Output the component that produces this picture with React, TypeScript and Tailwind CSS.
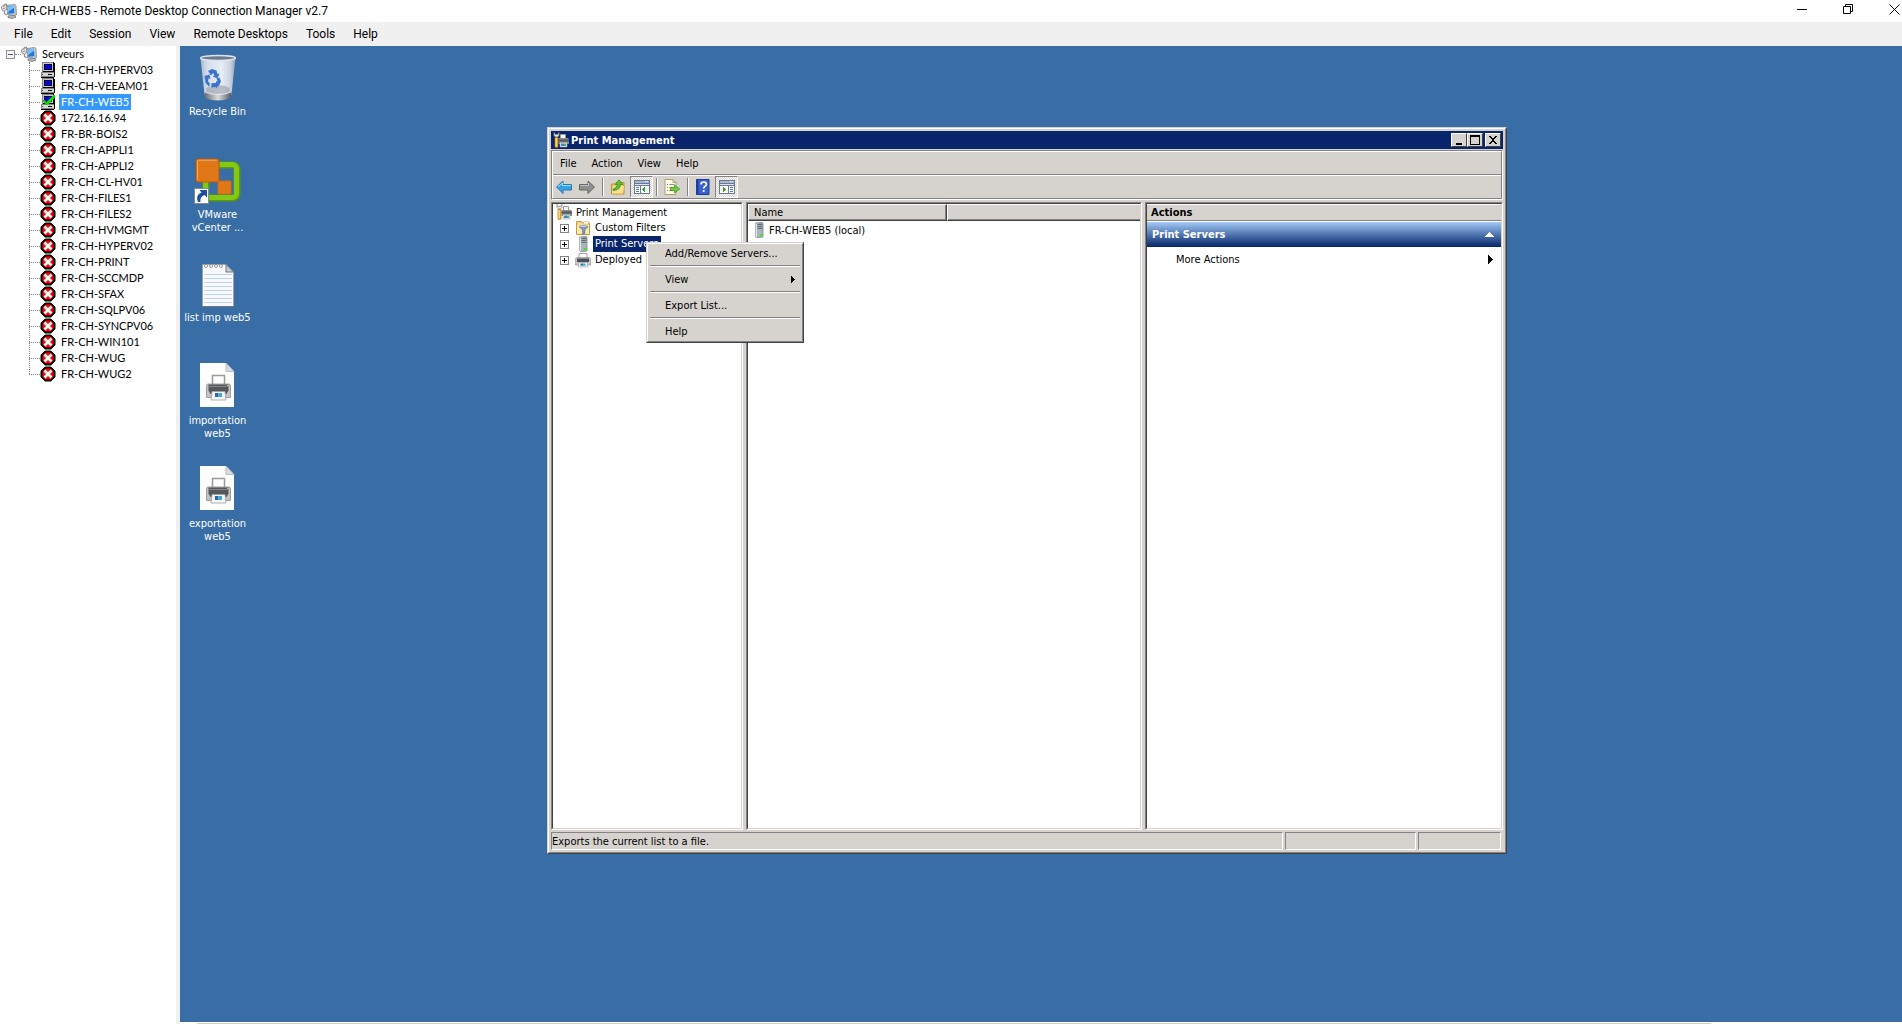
import React from 'react'

type IconProps = { className?: string }

const servers = [
    { name: 'FR-CH-HYPERV03', state: 'idle' },
    { name: 'FR-CH-VEEAM01', state: 'idle' },
    { name: 'FR-CH-WEB5', state: 'connected' },
    { name: '172.16.16.94', state: 'off' },
    { name: 'FR-BR-BOIS2', state: 'off' },
    { name: 'FR-CH-APPLI1', state: 'off' },
    { name: 'FR-CH-APPLI2', state: 'off' },
    { name: 'FR-CH-CL-HV01', state: 'off' },
    { name: 'FR-CH-FILES1', state: 'off' },
    { name: 'FR-CH-FILES2', state: 'off' },
    { name: 'FR-CH-HVMGMT', state: 'off' },
    { name: 'FR-CH-HYPERV02', state: 'off' },
    { name: 'FR-CH-PRINT', state: 'off' },
    { name: 'FR-CH-SCCMDP', state: 'off' },
    { name: 'FR-CH-SFAX', state: 'off' },
    { name: 'FR-CH-SQLPV06', state: 'off' },
    { name: 'FR-CH-SYNCPV06', state: 'off' },
    { name: 'FR-CH-WIN101', state: 'off' },
    { name: 'FR-CH-WUG', state: 'off' },
    { name: 'FR-CH-WUG2', state: 'off' }
]

const appMenu = ['File', 'Edit', 'Session', 'View', 'Remote Desktops', 'Tools', 'Help']
const consoleMenu = ['File', 'Action', 'View', 'Help']

// Classic bevels, always used in pairs (outer + inner)
const raisedOuter = 'border border-t-[#d6d3ce] border-l-[#d6d3ce] border-r-[#424142] border-b-[#424142]'
const raisedInner = 'border border-t-white border-l-white border-r-[#848284] border-b-[#848284]'
const sunkenOuter = 'border border-t-[#848284] border-l-[#848284] border-r-white border-b-white'
const sunkenInner = 'border border-t-[#424142] border-l-[#424142] border-r-[#d6d3ce] border-b-[#d6d3ce]'

function ServerGroupIcon({ className }: IconProps) {
    return (
        <svg className={className} width="16" height="16" viewBox="0 0 16 16" aria-hidden="true">
            <path d="M.5 4L3 1.500l2.500-.5L6 6 3.500 8 1 7z" fill="#ececec" stroke="#7d7d7d" strokeWidth=".9" />
            <path d="M2 3.500l2.500-1M2 5.500l2.500-.5" stroke="#8a8a8a" />
            <path d="M3.500 8v2.500L6 12" fill="none" stroke="#8e8e8e" strokeWidth="1.300" />
            <path d="M6 2.500l7.500-1L15 2.500l.3 9.500-2.300.5-6.500-1z" fill="#c4ccd4" stroke="#6f7f90" strokeWidth=".8" />
            <path d="M7 3.500l6-.8.300 7.500-6 .6z" fill="#1f78d8" />
            <path d="M7 3.500l6-.8v2l-6 4.300z" fill="#7cc0f5" />
            <path d="M7 13l6-.5 2 1.500-4 1.500-4-1z" fill="#c2c2c2" stroke="#707070" strokeWidth=".8" />
        </svg>
    )
}

function ComputerIcon({ connected }: { connected: boolean }) {
    return (
        <svg width="16" height="16" viewBox="0 0 16 16" shapeRendering="crispEdges" aria-hidden="true">
            <path d="M2 0h12v1h1v9h-1v1H2z" fill="#000" />
            <path d="M2 0h11v1H3v9H2z" fill="#848484" />
            <path d="M3 1h10v8H3z" fill="#c6c6c6" />
            <path d="M4 2h8v6H4z" fill="#000" />
            <path d="M5 3h6v4H5z" fill="#0000ff" />
            <path d="M1 10h14v5h-1v1H1z" fill="#000" />
            <path d="M1 10h13v5H1z" fill="#848484" />
            <path d="M2 11h12v3H2z" fill="#d6d6d6" />
            <path d="M8 12h4v1H8z" fill="#000" />
            <path d="M2 12h1v1H2z" fill="#008000" />
            {connected && (
                <path
                    d="M13 1h2v3h-1v1h-1v1h-1v1h-1v1h-1v1H9v1H8v1H6v-1H5V9H4V8H3V6h2v1h1v1h1V7h1V6h1V5h1V4h1V3h1V2h1z"
                    fill="#00e000"
                />
            )}
        </svg>
    )
}

function DisconnectedIcon() {
    return (
        <svg width="16" height="16" viewBox="0 0 16 16" aria-hidden="true">
            <path d="M5 1h6l4 4v6l-4 4H5l-4-4V5z" fill="#000" stroke="#000" strokeLinejoin="round" />
            <path d="M5.500 2.500h5l3 3v5l-3 3h-5l-3-3v-5z" fill="#f00" />
            <path d="M4.500 4.500l7 7M11.500 4.500l-7 7" stroke="#fff" strokeWidth="2.700" />
        </svg>
    )
}

function ToolboxPrinterIcon() {
    return (
        <svg width="16" height="16" viewBox="0 0 16 16" aria-hidden="true">
            <path d="M7.500 2.500h5v4h-5z" fill="#f4f4f4" stroke="#9b9b9b" />
            <path d="M5.500 6h9.500l1 1.500V12H5.500z" fill="#8a8a8e" />
            <path d="M5.500 7.500H16v2H5.500z" fill="#55565b" />
            <path d="M7 10.500h7V15H7z" fill="#e9edf3" stroke="#9b9b9b" strokeWidth=".6" />
            <path d="M8 11.500h3V14H8z" fill="#3f86d1" />
            <path d="M11 11.500h2V14h-2z" fill="#4fae5b" />
            <path d="M1 .5v3l1.500 1.500h2L6 3.500v-3L4.500 2.500h-2z" fill="#e7e7e7" stroke="#848484" strokeWidth=".8" />
            <path d="M2 5.500h3V15q-1.500 1.200-3 0z" fill="#f2b632" stroke="#a97309" strokeWidth=".7" />
            <path d="M3.200 6v8.500" stroke="#ffe49a" />
        </svg>
    )
}

function FilterFolderIcon() {
    return (
        <svg width="16" height="16" viewBox="0 0 16 16" aria-hidden="true">
            <path d="M1.500 1.500h5l1 1.500h7V14.500h-13z" fill="#f6d987" stroke="#c49a3c" />
            <path d="M8.500 1.500h5V4h-5z" fill="#fff" stroke="#c9b37d" strokeWidth=".6" />
            <path d="M2 5h12v9H2z" fill="#fbe9b1" />
            <path d="M4 6.500h9L9.700 10v3.500l-2 1V10z" fill="#7f9fc0" stroke="#46688c" strokeWidth=".7" />
            <ellipse cx="8.500" cy="6.600" rx="4.300" ry="1" fill="#c9dced" stroke="#46688c" strokeWidth=".5" />
        </svg>
    )
}

function ServerTowerIcon() {
    return (
        <svg width="16" height="16" viewBox="0 0 16 16" aria-hidden="true">
            <path d="M4.500 1l6.500-.5 1 .7V15l-6 .7-1.500-1z" fill="#a9b4bc" stroke="#7d8991" strokeWidth=".8" />
            <path d="M4.600 1.200l1.400.6v13.700l-1.400-.9z" fill="#dde4e9" />
            <path d="M6.500 2.500l5-.3M6.500 4.500l5-.3M6.500 6.500l5-.3" stroke="#56636c" />
            <path d="M9 12h2.500v2.300H9z" fill="#4be31d" />
        </svg>
    )
}

function PrinterIcon() {
    return (
        <svg width="16" height="16" viewBox="0 0 16 16" aria-hidden="true">
            <path d="M4 1.500h8v5H4z" fill="#fafafa" stroke="#a0a0a0" />
            <path d="M1.500 5.500h13l1.200 1.500V13H.3V7z" fill="#c8c8cb" stroke="#8b8b8f" strokeWidth=".6" />
            <path d="M2 6.500h12V10H2z" fill="#4d4e53" />
            <path d="M3.500 10.500h9V15h-9z" fill="#f1f4f8" stroke="#9a9a9a" strokeWidth=".6" />
            <path d="M5.500 11.500h3v2.300h-3z" fill="#2b75d2" />
            <path d="M8.500 11.500h2v2.300h-2z" fill="#48b08a" />
        </svg>
    )
}

function BackIcon() {
    return (
        <svg width="16" height="16" viewBox="0 0 16 16" aria-hidden="true">
            <path d="M.5 8L7 2V5.500h8.500v5.500H7v3.500z" fill="#38a3e3" stroke="#2778b5" strokeLinejoin="round" />
            <path d="M2 7.700L6.500 4v2.500H15" fill="none" stroke="#9bdcf8" />
        </svg>
    )
}

function ForwardIcon() {
    return (
        <svg width="16" height="16" viewBox="0 0 16 16" aria-hidden="true">
            <path d="M15.500 8L9 2V5.500H.5v5.500H9v3.500z" fill="#8e8e8e" stroke="#666" strokeLinejoin="round" />
            <path d="M1.500 6.500H9.500V4" fill="none" stroke="#c4c4c4" />
        </svg>
    )
}

function UpFolderIcon() {
    return (
        <svg width="16" height="16" viewBox="0 0 16 16" aria-hidden="true">
            <path d="M1.500 5h4l1-1.500h7.500V15h-12.500z" fill="#eec45f" stroke="#c09030" />
            <path d="M2.500 7H14l-1 7.500H2z" fill="#fbdf8f" />
            <path d="M3 10q4-1 4.500-4.500H5.200L9 .8l4 4.700h-2.500q0 5.500-7.500 6z" fill="#56c234" stroke="#2c8a1a" strokeWidth=".7" />
        </svg>
    )
}

function PaneIcon({ side }: { side: 'left' | 'right' }) {
    return (
        <svg width="16" height="14" viewBox="0 0 16 14" shapeRendering="crispEdges" aria-hidden="true">
            <path d="M0 0h16v14H0z" fill="#6a7893" />
            <path d="M1 1h14v2H1z" fill="#a9b8cf" />
            <path d="M11 1h1v1h-1zM13 1h1v1h-1z" fill="#fff" />
            <path d="M1 4h14v1H1z" fill="#dfe5ee" />
            <path d="M1 6h14v7H1z" fill="#fff" />
            {side === 'left' ? (
                <>
                    <path d="M6 6h1v7H6z" fill="#6a7893" />
                    <path d="M2 7h3v1H2zM2 9h3v1H2zM2 11h3v1H2z" fill="#4f79b7" />
                    <path d="M8 9h1V8h1V7h1v5h-1v-1H9v-1H8z" fill="#2fa51e" />
                </>
            ) : (
                <>
                    <path d="M9 6h1v7H9z" fill="#6a7893" />
                    <path d="M11 7h3v1h-3zM11 9h3v1h-3zM11 11h3v1h-3z" fill="#4f79b7" />
                    <path d="M7 9H6V8H5V7H4v5h1v-1h1v-1h1z" fill="#2fa51e" />
                </>
            )}
        </svg>
    )
}

function ExportIcon() {
    return (
        <svg width="16" height="16" viewBox="0 0 16 16" aria-hidden="true">
            <path d="M1 .5h8L12 3.500V15.500H1z" fill="#fff9e2" stroke="#a99f80" />
            <path d="M9 .5V3.500h3" fill="none" stroke="#a99f80" />
            <path d="M3 5.500h1M3 8.500h1M3 11.500h1" stroke="#6a86b5" />
            <path d="M5.500 5.500h5M5.500 8.500h3M5.500 11.500h3" stroke="#8a8a8a" />
            <path d="M6.500 8.500H10.500V6L15.700 10l-5.200 4v-2.500h-4z" fill="#6ccc3c" stroke="#3b951c" strokeWidth=".7" />
        </svg>
    )
}

function HelpBookIcon() {
    return (
        <svg width="16" height="16" viewBox="0 0 16 16" aria-hidden="true">
            <path d="M1.500 .5h12.500v15H1.500z" fill="#3a62cf" stroke="#1d3a96" />
            <path d="M1.500 .5h2v15h-2z" fill="#1f3fa3" />
            <path d="M6 5.500q0-2.500 2.700-2.500t2.700 2.200q0 1.300-1.300 2T8.700 9.500" fill="none" stroke="#fff" strokeWidth="1.700" />
            <circle cx="8.700" cy="12" r="1.100" fill="#fff" />
        </svg>
    )
}

function RecycleBinIcon() {
    return (
        <svg width="48" height="48" viewBox="0 0 48 48" aria-hidden="true">
            <defs>
                <linearGradient id="glass">
                    <stop offset="0" stopColor="#b4bfd0" />
                    <stop offset=".2" stopColor="#e3e9f2" />
                    <stop offset=".6" stopColor="#f5f7fb" />
                    <stop offset=".85" stopColor="#d3dbe7" />
                    <stop offset="1" stopColor="#98a4b8" />
                </linearGradient>
                <linearGradient id="foot">
                    <stop offset="0" stopColor="#6a6d70" />
                    <stop offset=".5" stopColor="#d8dadb" />
                    <stop offset="1" stopColor="#55585b" />
                </linearGradient>
            </defs>
            <path d="M6.500 4l4 36.500q13.500 6 27 0L41.500 4z" fill="url(#glass)" fillOpacity=".93" />
            <path d="M10.500 38.500l.8 5.500q12.500 5 25.400 0l.8-5.500q-13 5-27 0z" fill="url(#foot)" />
            <path d="M12 34q12-6 24 0l-.5 4q-11.500 4-23 0z" fill="#8f959d" fillOpacity=".55" />
            <ellipse cx="24" cy="4" rx="17.500" ry="2.500" fill="#6d7a8c" stroke="#dfe4ea" strokeWidth="1.300" />
            <g fill="#3b73d1">
                <path d="M14 17l4-2 4.500 1.500 1 3.500 2-.5-2 5-5-2 2-1-1.500-2.500-2 2.500z" />
                <path d="M10.500 22l5-1.500 1 4.500-1.800-.7-.7 3 2 2.500-1 3-3.500-4z" />
                <path d="M17.500 33.500l-.2-4.200 4.500-.3.700-2 3 3.500-3.500 4-.2-1.500z" />
                <path d="M22.500 24.500l3-1 1.500 4-1.800 3.500-3-3 1.300-.8z" />
            </g>
        </svg>
    )
}

function VmwareIcon() {
    return (
        <svg width="48" height="48" viewBox="1 0 48 48" aria-hidden="true">
            <rect x="13" y="8" width="31" height="33" rx="4" fill="none" stroke="#5a9a10" strokeWidth="7" />
            <rect x="12.500" y="7.500" width="31" height="33" rx="4" fill="none" stroke="#85c814" strokeWidth="5" />
            <rect x="3" y="2" width="23" height="23" rx="2" fill="#e07818" stroke="#b9580a" />
            <path d="M4.500 23V4q0-.8.8-.8H24" fill="none" stroke="#f5ac66" />
            <rect x="25" y="24" width="13" height="13" rx="1" fill="#e07818" stroke="#c96a1a" />
            <rect x="1.500" y="31.500" width="14" height="15" fill="#fff" stroke="#7c8a9a" />
            <path d="M5 45q-3-7 3.500-9.500L6.500 33h7.500v7.500L11.500 38Q6.500 40 7.500 45z" fill="#1d4f9c" />
        </svg>
    )
}

function NotepadIcon() {
    return (
        <svg width="48" height="48" viewBox="0 -1 48 48" aria-hidden="true">
            <path d="M8.500 3.500H32L39.500 11v34.500h-31z" fill="#f7f9fc" stroke="#9aa3ad" />
            <path
                d="M10 13.500h28M10 17.500h28M10 21.500h28M10 25.500h28M10 29.500h28M10 33.500h28M10 37.500h28M10 41.500h28"
                stroke="#bcd3ea"
            />
            <path d="M32 3.500V11h7.500z" fill="#c9ced4" stroke="#6f757c" />
            {[12, 17, 22, 27].map((x) => (
                <circle key={x} cx={x} cy="5" r="1.500" fill="#fff" stroke="#80868c" strokeWidth=".8" />
            ))}
            <path d="M8 45.500h32" stroke="#6f7983" />
        </svg>
    )
}

function PrinterFileIcon() {
    return (
        <svg width="48" height="48" viewBox="0 2 48 48" aria-hidden="true">
            <path d="M6 2h26l8 8.500V46H6z" fill="#fdfdfb" />
            <path d="M32 2v8.500h8z" fill="#d9dcdf" stroke="#a9b3be" strokeWidth=".8" />
            <path d="M18.500 14.500h12v11h-12z" fill="#fdfdfd" stroke="#9a9a9a" strokeWidth="1.500" />
            <path d="M14 23h21q1.500 0 1.500 2v11.500H12.500V25q0-2 1.500-2z" fill="#c3c3c5" stroke="#8f8f92" strokeWidth=".8" />
            <path d="M14.500 23.500h20v6l-2 3.500h-16l-2-3.500z" fill="#56575b" />
            <path d="M15 25.500h19" stroke="#85868a" />
            <path d="M33 24h2v1h-2z" fill="#7fe04a" />
            <path d="M18 30.500h13l1 8.500H17z" fill="#f3f5f8" stroke="#a0a0a3" strokeWidth=".8" />
            <path d="M21 32h3.500v4H21z" fill="#2a64b8" />
            <path d="M24.500 32H28v4h-3.500z" fill="#43a8c0" />
        </svg>
    )
}

const shortcuts = [
    { icon: RecycleBinIcon, lines: ['Recycle Bin'] },
    { icon: VmwareIcon, lines: ['VMware', 'vCenter ...'] },
    { icon: NotepadIcon, lines: ['list imp web5'] },
    { icon: PrinterFileIcon, lines: ['importation', 'web5'] },
    { icon: PrinterFileIcon, lines: ['exportation', 'web5'] }
]

function TitleBar() {
    return (
        <header className="flex h-[22px] items-start justify-between bg-white pt-px pl-px text-xs">
            <div className="flex items-center gap-[5px]">
                <ServerGroupIcon />
                <h1 className="leading-5">FR-CH-WEB5 - Remote Desktop Connection Manager v2.7</h1>
            </div>
            <div className="flex gap-[35px] pt-[3px] pr-[2px]">
                <button aria-label="Minimize">
                    <svg width="11" height="11" shapeRendering="crispEdges">
                        <path d="M0 5h10v1H0z" />
                    </svg>
                </button>
                <button aria-label="Restore">
                    <svg width="11" height="11" fill="none" stroke="#000">
                        <path d="M.5 2.500h7v7h-7zM2.500 2V.5h7v7H8" />
                    </svg>
                </button>
                <button aria-label="Close">
                    <svg width="11" height="11" stroke="#000">
                        <path d="M.5 .5l10 10M10.500 .5l-10 10" />
                    </svg>
                </button>
            </div>
        </header>
    )
}

function ServerTree() {
    return (
        <nav className="w-[180px] shrink-0 border-r-4 border-[#f0f0f0] bg-white font-[Lato,sans-serif] text-[11px] leading-4">
            <div className="flex h-4 items-center pl-[6px]">
                <button aria-label="Collapse Serveurs" className="shrink-0">
                    <svg width="9" height="9" shapeRendering="crispEdges">
                        <path d="M0 0h9v9H0z" fill="#919191" />
                        <path d="M1 1h7v7H1z" fill="#f6f6f6" />
                        <path d="M2 4h5v1H2z" fill="#3c5aa0" />
                    </svg>
                </button>
                <span className="w-[6px] border-t border-dotted border-[#808080]" />
                <ServerGroupIcon />
                <span className="pl-[5px]">Serveurs</span>
            </div>
            <ul className="relative pl-[29px]">
                <li aria-hidden="true" className="absolute top-0 bottom-2 left-[29px] border-l border-dotted border-[#808080]" />
                {servers.map((server) => (
                    <li key={server.name} className="flex h-4 items-center">
                        <span className="w-[11px] border-t border-dotted border-[#808080]" />
                        {server.state === 'off' ? (
                            <DisconnectedIcon />
                        ) : (
                            <ComputerIcon connected={server.state === 'connected'} />
                        )}
                        <button
                            className={
                                server.state === 'connected'
                                    ? 'ml-[3px] bg-[#3399ff] px-[2px] text-white'
                                    : 'ml-[3px] px-[2px]'
                            }>
                            {server.name}
                        </button>
                    </li>
                ))}
            </ul>
        </nav>
    )
}

function ToolbarSeparator() {
    return <span className="mx-[3px] h-[18px] w-[2px] border-r border-l border-r-white border-l-[#848284]" />
}

function ToolbarButton({
    label,
    pressed,
    children
}: {
    label: string
    pressed?: boolean
    children: React.ReactNode
}) {
    return (
        <button
            aria-label={label}
            className={
                pressed
                    ? 'flex h-[22px] w-[23px] items-center justify-center border border-t-[#848284] border-l-[#848284] border-r-white border-b-white bg-[repeating-conic-gradient(#fff_0_25%,#d6d3ce_0_50%)] bg-[length:2px_2px]'
                    : 'flex h-[22px] w-[23px] items-center justify-center pr-px'
            }>
            {children}
        </button>
    )
}

function CaptionButton({ label, path }: { label: string; path: string }) {
    return (
        <button
            aria-label={label}
            className="flex h-[14px] w-4 items-center justify-center border border-t-white border-l-white border-r-[#424142] border-b-[#424142] bg-[#d6d3ce]">
            <svg width="12" height="10" shapeRendering="crispEdges">
                <path d={path} />
            </svg>
        </button>
    )
}

function ExpandBox({ label }: { label: string }) {
    return (
        <button aria-label={`Expand ${label}`}>
            <svg width="9" height="9" shapeRendering="crispEdges">
                <path d="M0 0h9v9H0z" fill="#848284" />
                <path d="M1 1h7v7H1z" fill="#fff" />
                <path d="M2 4h5v1H2zM4 2h1v5H4z" />
            </svg>
        </button>
    )
}

function ConsoleTree() {
    const nodes = [
        { name: 'Custom Filters', icon: <FilterFolderIcon /> },
        { name: 'Print Servers', icon: <ServerTowerIcon />, selected: true },
        { name: 'Deployed Printers', icon: <PrinterIcon /> }
    ]
    return (
        <div className={`w-48 shrink-0 ${sunkenOuter}`}>
            <div className={`h-full bg-white ${sunkenInner}`}>
                <div className="flex h-4 items-center pl-[3px]">
                    <ToolboxPrinterIcon />
                    <span className="pl-1">Print Management</span>
                </div>
                <ul>
                    {nodes.map((node) => (
                        <li key={node.name} className="flex h-4 items-center pl-[7px]">
                            <ExpandBox label={node.name} />
                            <span className="pr-[2px] pl-[6px]">{node.icon}</span>
                            <button
                                className={
                                    node.selected
                                        ? 'bg-[#08246b] px-[2px] leading-4 whitespace-nowrap text-white'
                                        : 'px-[2px] leading-4 whitespace-nowrap'
                                }>
                                {node.name}
                            </button>
                        </li>
                    ))}
                </ul>
            </div>
        </div>
    )
}

function ServerList() {
    return (
        <div className={`w-[396px] shrink-0 ${sunkenOuter}`}>
            <div className={`h-full bg-white ${sunkenInner}`}>
                <table className="w-full table-fixed border-separate border-spacing-0">
                    <thead>
                        <tr className="h-[17px] bg-[#d6d3ce] text-left leading-[14px]">
                            <th className="w-[199px] border-t border-r border-b border-l border-t-white border-r-[#424142] border-b-[#424142] border-l-white p-0 pl-[5px] font-normal shadow-[inset_-1px_-1px_#848284]">
                                Name
                            </th>
                            <th className="border-t border-b border-l border-t-white border-b-[#424142] border-l-white p-0 shadow-[inset_0_-1px_#848284]" />
                        </tr>
                    </thead>
                    <tbody>
                        <tr>
                            <td colSpan={2} className="p-0">
                                <div className="flex h-[18px] items-center gap-[2px] pl-[3px]">
                                    <ServerTowerIcon />
                                    <span>FR-CH-WEB5 (local)</span>
                                </div>
                            </td>
                        </tr>
                    </tbody>
                </table>
            </div>
        </div>
    )
}

function ActionsPane() {
    return (
        <div className={`min-w-0 flex-1 ${sunkenOuter}`}>
            <div className={`h-full bg-white ${sunkenInner}`}>
                <h2 className="h-[17px] border-t border-b border-t-white border-b-[#848284] bg-[#d6d3ce] pl-1 leading-4 font-bold">
                    Actions
                </h2>
                <button className="mt-px flex h-[25px] w-full items-center justify-between bg-linear-to-b from-[#a5cbf7] to-[#08246b] pr-[7px] pl-[5px] font-bold text-white">
                    Print Servers
                    <svg width="9" height="5" shapeRendering="crispEdges" fill="#fff">
                        <path d="M4 0h1v1h1v1h1v1h1v1h1v1H0V4h1V3h1V2h1V1h1z" />
                    </svg>
                </button>
                <button className="flex h-6 w-full items-center justify-between pr-2 pl-[29px]">
                    More Actions
                    <svg width="5" height="9" shapeRendering="crispEdges">
                        <path d="M0 0h1v1h1v1h1v1h1v1h1v1H4v1H3v1H2v1H1v1H0z" />
                    </svg>
                </button>
            </div>
        </div>
    )
}

function ContextMenu() {
    const items = ['Add/Remove Servers...', 'View', 'Export List...', 'Help']
    return (
        <div role="menu" className={`absolute top-[114px] left-[98px] w-[158px] bg-[#d6d3ce] ${raisedOuter}`}>
            <div className={`p-px ${raisedInner}`}>
                {items.map((item, i) => (
                    <React.Fragment key={item}>
                        {i > 0 && (
                            <div role="separator" className="mx-px mt-[3px] mb-1 border-t border-b border-t-[#848284] border-b-white" />
                        )}
                        <button role="menuitem" className="flex h-[17px] w-full items-center justify-between pr-[6px] pl-4">
                            {item}
                            {item === 'View' && (
                                <svg width="4" height="7" shapeRendering="crispEdges">
                                    <path d="M0 0h1v1h1v1h1v1h1v1H3v1H2v1H1v1H0z" />
                                </svg>
                            )}
                        </button>
                    </React.Fragment>
                ))}
            </div>
        </div>
    )
}

function PrintManagement() {
    return (
        <section className={`absolute top-[81px] left-[367px] h-[727px] w-[960px] bg-[#d6d3ce] ${raisedOuter}`}>
            <div className={`flex h-full flex-col p-[2px] ${raisedInner}`}>
                <div className="flex h-[18px] shrink-0 items-center justify-between bg-[#08246b] pr-[2px] pl-[2px]">
                    <div className="flex items-center gap-[2px]">
                        <ToolboxPrinterIcon />
                        <h2 className="font-bold text-white">Print Management</h2>
                    </div>
                    <div className="flex">
                        <CaptionButton label="Minimize" path="M3 8h6v2H3z" />
                        <CaptionButton label="Maximize" path="M1 0h10v10H1zM2 2v7h8V2z" />
                        <span className="w-[2px]" />
                        <CaptionButton
                            label="Close"
                            path="M2 1h2v1h1v1h2V2h1V1h2v1H9v1H8v1H7v2h1v1h1v1h1v1H8V8H7V7H5v1H4v1H2V8h1V7h1V6h1V4H4V3H3V2H2z"
                        />
                    </div>
                </div>
                <div className={`mt-px shrink-0 ${sunkenOuter}`}>
                    <div className={raisedInner}>
                        <div className="flex h-[22px] items-center gap-[15px] pl-[7px]">
                            {consoleMenu.map((item) => (
                                <button key={item}>{item}</button>
                            ))}
                        </div>
                        <div className="h-[2px] border-t border-b border-t-[#848284] border-b-white" />
                        <div className="flex h-[22px] items-center">
                            <ToolbarButton label="Back">
                                <BackIcon />
                            </ToolbarButton>
                            <ToolbarButton label="Forward">
                                <ForwardIcon />
                            </ToolbarButton>
                            <ToolbarSeparator />
                            <ToolbarButton label="Up one level">
                                <UpFolderIcon />
                            </ToolbarButton>
                            <ToolbarButton label="Show/Hide Console Tree" pressed>
                                <PaneIcon side="left" />
                            </ToolbarButton>
                            <ToolbarSeparator />
                            <ToolbarButton label="Export List">
                                <ExportIcon />
                            </ToolbarButton>
                            <ToolbarSeparator />
                            <ToolbarButton label="Help">
                                <HelpBookIcon />
                            </ToolbarButton>
                            <ToolbarButton label="Show/Hide Action Pane" pressed>
                                <PaneIcon side="right" />
                            </ToolbarButton>
                        </div>
                    </div>
                </div>
                <div className="my-[2px] flex min-h-0 flex-1 gap-[3px]">
                    <ConsoleTree />
                    <ServerList />
                    <ActionsPane />
                </div>
                <footer className="flex h-[18px] shrink-0 gap-[2px] pr-[2px] leading-[17px]">
                    <div className={`flex-1 ${sunkenOuter}`}>Exports the current list to a file.</div>
                    <div className={`w-[131px] ${sunkenOuter}`} />
                    <div className={`w-[83px] ${sunkenOuter}`} />
                </footer>
            </div>
            <ContextMenu />
        </section>
    )
}

export default function App() {
    return (
        <div className="flex min-h-screen flex-col bg-white font-[Roboto,sans-serif] text-black">
            <TitleBar />
            <nav className="flex h-6 items-center gap-[18px] bg-[#f0f0f0] pl-[14px] text-xs">
                {appMenu.map((item) => (
                    <button key={item}>{item}</button>
                ))}
            </nav>
            <div className="flex flex-1">
                <ServerTree />
                <main className="flex min-w-0 flex-1 flex-col font-['DejaVu_Sans_Condensed','DejaVu_Sans',sans-serif] text-[11px] leading-[13px]">
                    <div className="relative flex-1 overflow-hidden bg-[#396da5] pt-2">
                        <ul className="w-[75px] text-center text-white">
                            {shortcuts.map(({ icon: Icon, lines }) => (
                                <li key={lines.join(' ')} className="flex h-[103px] flex-col items-center gap-[3px]">
                                    <Icon />
                                    <a href="#desktop" className="whitespace-nowrap">
                                        {lines.map((line) => (
                                            <span key={line} className="block">
                                                {line}
                                            </span>
                                        ))}
                                    </a>
                                </li>
                            ))}
                        </ul>
                        <PrintManagement />
                    </div>
                    <div className="mr-[191px] ml-[17px] h-[2px] border-b border-[#cdcdcd]" />
                </main>
            </div>
        </div>
    )
}
